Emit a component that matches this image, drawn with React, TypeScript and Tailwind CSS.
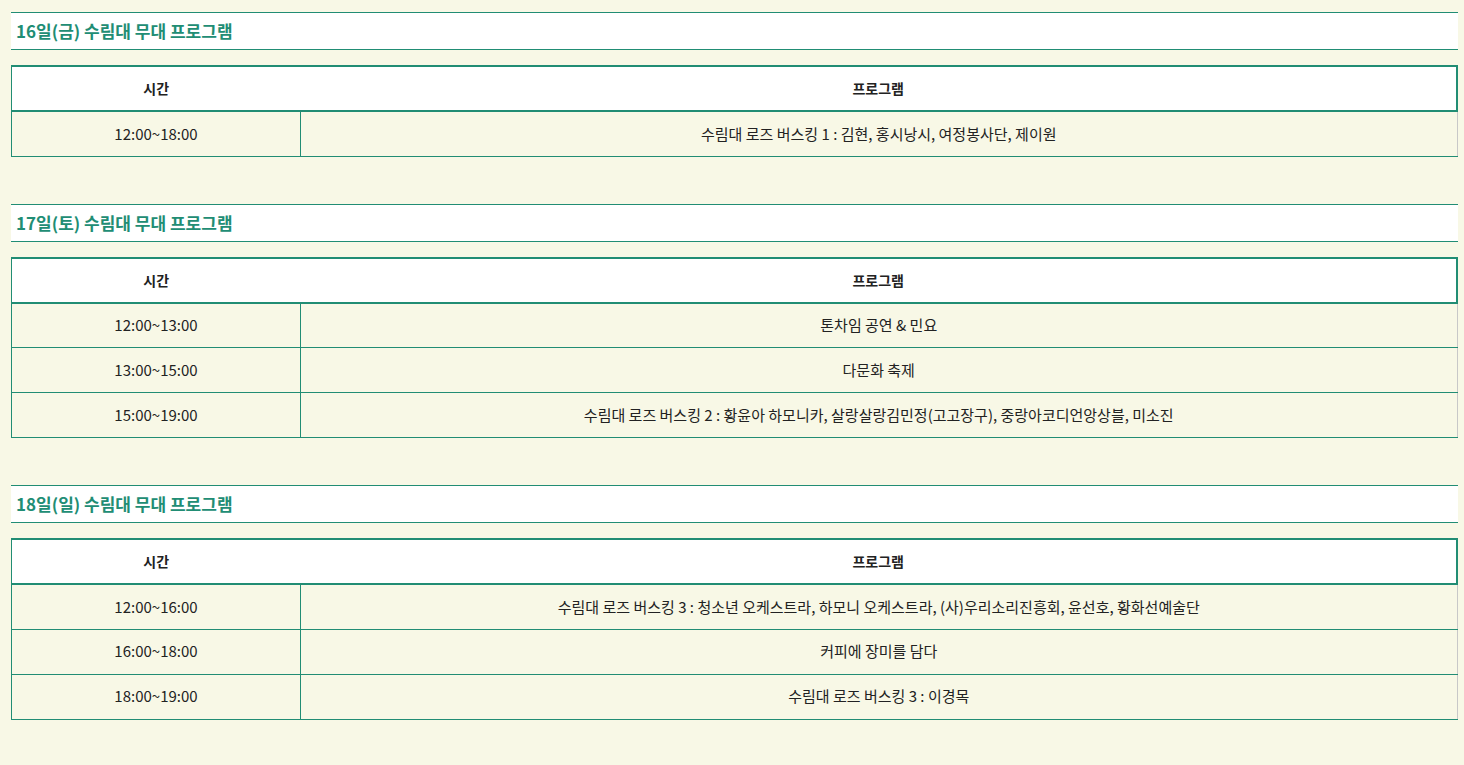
import React from 'react';

interface Row {
  time: string;
  program: string;
}

interface Day {
  title: string;
  rows: Row[];
}

const days: Day[] = [
  {
    title: '16일(금) 수림대 무대 프로그램',
    rows: [{ time: '12:00~18:00', program: '수림대 로즈 버스킹 1 : 김현, 홍시낭시, 여정봉사단, 제이원' }],
  },
  {
    title: '17일(토) 수림대 무대 프로그램',
    rows: [
      { time: '12:00~13:00', program: '톤차임 공연 & 민요' },
      { time: '13:00~15:00', program: '다문화 축제' },
      { time: '15:00~19:00', program: '수림대 로즈 버스킹 2 : 황윤아 하모니카, 살랑살랑김민정(고고장구), 중랑아코디언앙상블, 미소진' },
    ],
  },
  {
    title: '18일(일) 수림대 무대 프로그램',
    rows: [
      { time: '12:00~16:00', program: '수림대 로즈 버스킹 3 : 청소년 오케스트라, 하모니 오케스트라, (사)우리소리진흥회, 윤선호, 황화선예술단' },
      { time: '16:00~18:00', program: '커피에 장미를 담다' },
      { time: '18:00~19:00', program: '수림대 로즈 버스킹 3 : 이경목' },
    ],
  },
];

const DaySection: React.FC<{ day: Day; first: boolean }> = ({ day, first }) => (
  <section className={first ? '' : 'mt-[47px]'}>
    <h3 className="h-[38px] flex items-center pl-[5px] bg-white border-y border-[#218d74] text-[17px] font-bold text-[#218d74]">
      {day.title}
    </h3>
    <table className="mt-[15px] w-full border-collapse table-fixed text-[15px] text-[#222]">
      <colgroup>
        <col className="w-[289px]" />
        <col />
      </colgroup>
      <thead>
        <tr className="h-[45px] bg-white">
          <th className="border-t-2 border-b-2 border-l border-[#218d74] font-bold text-[14px]">시간</th>
          <th className="border-t-2 border-b-2 border-r-2 border-[#218d74] font-bold text-[14px]">프로그램</th>
        </tr>
      </thead>
      <tbody>
        {day.rows.map((row) => (
          <tr key={row.time} className="h-[45px]">
            <td className="border-b border-l border-r border-[#218d74] text-center">{row.time}</td>
            <td className="border-b border-[#218d74] border-r border-r-[#c8c8c8] text-center">{row.program}</td>
          </tr>
        ))}
      </tbody>
    </table>
  </section>
);

export default function App() {
  return (
    <div
      className="min-h-[765px] bg-[#f8f8e6] pt-3 pl-[11px] pr-[6px]"
      style={{ fontFamily: '"Noto Sans CJK KR", "Noto Sans", sans-serif' }}
    >
      {days.map((day, i) => (
        <DaySection key={day.title} day={day} first={i === 0} />
      ))}
    </div>
  );
}
